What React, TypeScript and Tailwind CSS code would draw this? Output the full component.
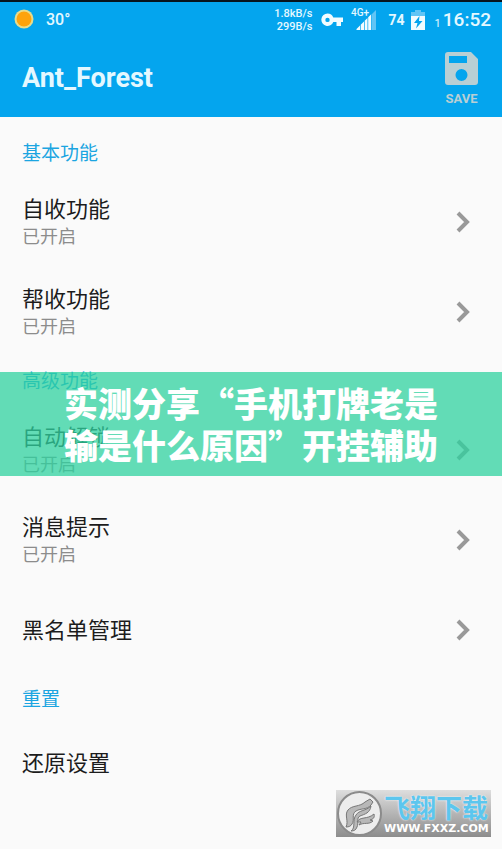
import type { ReactNode } from 'react';

interface SettingRowProps {
  title: string;
  summary?: string;
  arrow?: boolean;
}

function Chevron() {
  return (
    <svg viewBox="0 0 16 24" className="h-6 w-4 shrink-0" fill="none" stroke="#999" strokeWidth="4" aria-hidden="true">
      <path d="M3 3 12 12l-9 9" />
    </svg>
  );
}

function SettingRow({ title, summary, arrow = true }: SettingRowProps) {
  return (
    <button type="button" className="flex min-h-20 w-full items-center justify-between pr-[31px] pl-[22px] text-left">
      <span className={arrow ? 'flex h-[90px] flex-col justify-center pt-[2px]' : 'flex flex-col justify-center pt-[2px]'}>
        <span className="text-[22px] leading-7 text-[#1c1c1c]">{title}</span>
        {summary && <span className="text-lg leading-[26px] text-[#8c8c8c]">{summary}</span>}
      </span>
      {arrow && <Chevron />}
    </button>
  );
}

function Section({ title, children }: { title: string; children: ReactNode }) {
  return (
    <section>
      <h2 className="px-[22px] pt-[2px] text-[19px] leading-[46px] text-[#1ba5e1]">{title}</h2>
      {children}
    </section>
  );
}

function StatusBar() {
  return (
    <div className="flex h-9 items-center justify-between pr-[11px] pl-3 text-[#e4f8ff]">
      <div className="flex items-center gap-3">
        <svg viewBox="0 0 22 22" className="size-[22px]" aria-hidden="true">
          <circle cx="12" cy="10" r="9.5" fill="#e8dc8c" />
          <circle cx="12" cy="10" r="7.5" fill="#fea30c" />
        </svg>
        <span className="text-base font-medium">30°</span>
      </div>
      <div className="flex items-center">
        <div className="text-right text-[11px] leading-[13px] font-medium">
          <p>1.8kB/s</p>
          <p>299B/s</p>
        </div>
        <svg viewBox="0 0 22 14" className="ml-2 h-[14px] w-[22px]" fill="#f2fcff" aria-hidden="true">
          <path fillRule="evenodd" d="M6.5 0.5a6.2 6.2 0 0 1 5.800 4H22v4.500h-2V13h-4.500V9h-3.200A6.200 6.200 0 1 1 6.500 0.500Zm0 4.200a2.200 2.200 0 1 0 0 4.400a2.200 2.200 0 0 0 0-4.400Z" />
        </svg>
        <svg viewBox="0 0 26 24" className="ml-2 h-6 w-[26px]" aria-hidden="true">
          <path d="m20.500 6.500 4.500-4.500v20h-4.500Z" fill="#62c5f5" />
          <path d="M5.500 22v-1l3.500-3.500V22Zm4.200 0v-5.200l3.300-3.300V22Zm4 0v-9.200l2.800-2.800v12Zm3.500 0V9.300l2.800-2.800V22Z" fill="#f2fcff" />
          <text x="0" y="8" fontSize="10" fontWeight="500" fill="#e4f8ff">4G+</text>
        </svg>
        <span className="ml-3 text-[14px] font-bold">74</span>
        <svg viewBox="0 0 14 20" className="ml-[6px] h-5 w-[14px]" aria-hidden="true">
          <path d="M4 0h6v2h4v4H0V2h4Z" fill="#62c5f5" />
          <path d="M0 6h14v14H0Z" fill="#f2fcff" />
          <path d="M8.500 6 3 13h3.500L5 18.500 11.500 11H8Z" fill="#04a5ee" />
        </svg>
        <span className="ml-[10px] self-end text-[11px] leading-5">1</span>
        <span className="ml-[2px] text-[19px] font-medium">16:52</span>
      </div>
    </div>
  );
}

function Watermark() {
  return (
    <div className="flex h-[47px] w-[155px] items-center bg-linear-to-b from-[#dedede] to-[#8d8d8d]">
      <svg viewBox="0 0 48 47" className="h-[47px] w-12 shrink-0" aria-hidden="true">
        <circle cx="23.5" cy="23.5" r="21.500" fill="#ededed" stroke="#8b8b8b" strokeWidth="2" />
        <g fill="#b8b8b8" stroke="#777">
          <path d="M10 37c3-6-2-12 2-17 4-5 12-3 17-8l5-3 3 3-2 3c-4 5-10 3-15 6-5 3-1 9-4 13-1 2-3 3-6 3Z" />
          <path d="M15 41c5-3 1-11 5-16 3-5 10-4 15-9-1 7-6 8-11 10-4 2-1 7-3 11-1 3-3 4-6 4Z" />
          <path d="M21 32c3-6 10-2 17-8 1 4-1 5-4 6l3 1c-4 4-9 1-14 4l2-3Z" />
        </g>
      </svg>
      <div className="whitespace-nowrap">
        <p className="pt-[2px] text-[26px] leading-7 font-bold text-[#5cc6ee] [text-shadow:0_0_2px_#fff]">飞翔下载</p>
        <p className="font-['DejaVu_Sans',sans-serif] text-[11px] leading-3 font-bold text-white">WWW.FXXZ.COM</p>
      </div>
    </div>
  );
}

export default function App() {
  return (
    <div className="relative flex min-h-screen flex-col bg-[#fafafa] font-[Roboto,'Noto_Sans_CJK_SC',sans-serif]">
      <header className="border-t-2 border-[#07141d] bg-[#04a5ee]">
        <StatusBar />
        <div className="flex h-[79px] items-center justify-between pr-6 pl-[22px]">
          <h1 className="pt-[2px] text-[27px] font-bold text-[#e4f8ff]">Ant_Forest</h1>
          <button type="button" className="flex flex-col items-center gap-1 pt-[6px] text-[#b9cfd4]">
            <svg viewBox="0 0 33 33" className="size-[33px]" aria-hidden="true">
              <path fill="currentColor" fillRule="evenodd" d="M3 0h23l7 7v23q0 3-3 3H3q-3 0-3-3V3q0-3 3-3Zm1 4v7h18V4Zm12.500 13a6 6 0 1 0 0 12a6 6 0 0 0 0-12Z" />
            </svg>
            <span className="text-[13px] leading-5 font-bold">SAVE</span>
          </button>
        </div>
      </header>

      <main className="pt-3">
        <Section title="基本功能">
          <SettingRow title="自收功能" summary="已开启" />
          <SettingRow title="帮收功能" summary="已开启" />
        </Section>
        <Section title="高级功能">
          <SettingRow title="自动解锁" summary="已开启" />
          <SettingRow title="消息提示" summary="已开启" />
          <SettingRow title="黑名单管理" />
        </Section>
        <Section title="重置">
          <SettingRow title="还原设置" arrow={false} />
        </Section>
      </main>

      <div className="absolute inset-x-0 top-[372px] flex justify-center bg-[#2fd19f]/75 py-[10px]">
        <p className="w-[374px] font-['Noto_Sans_CJK_SC',sans-serif] text-[34px] leading-[42px] font-black text-white">
          实测分享“手机打牌老是输是什么原因”开挂辅助
        </p>
      </div>

      <div className="absolute right-[11px] bottom-3">
        <Watermark />
      </div>
    </div>
  );
}
